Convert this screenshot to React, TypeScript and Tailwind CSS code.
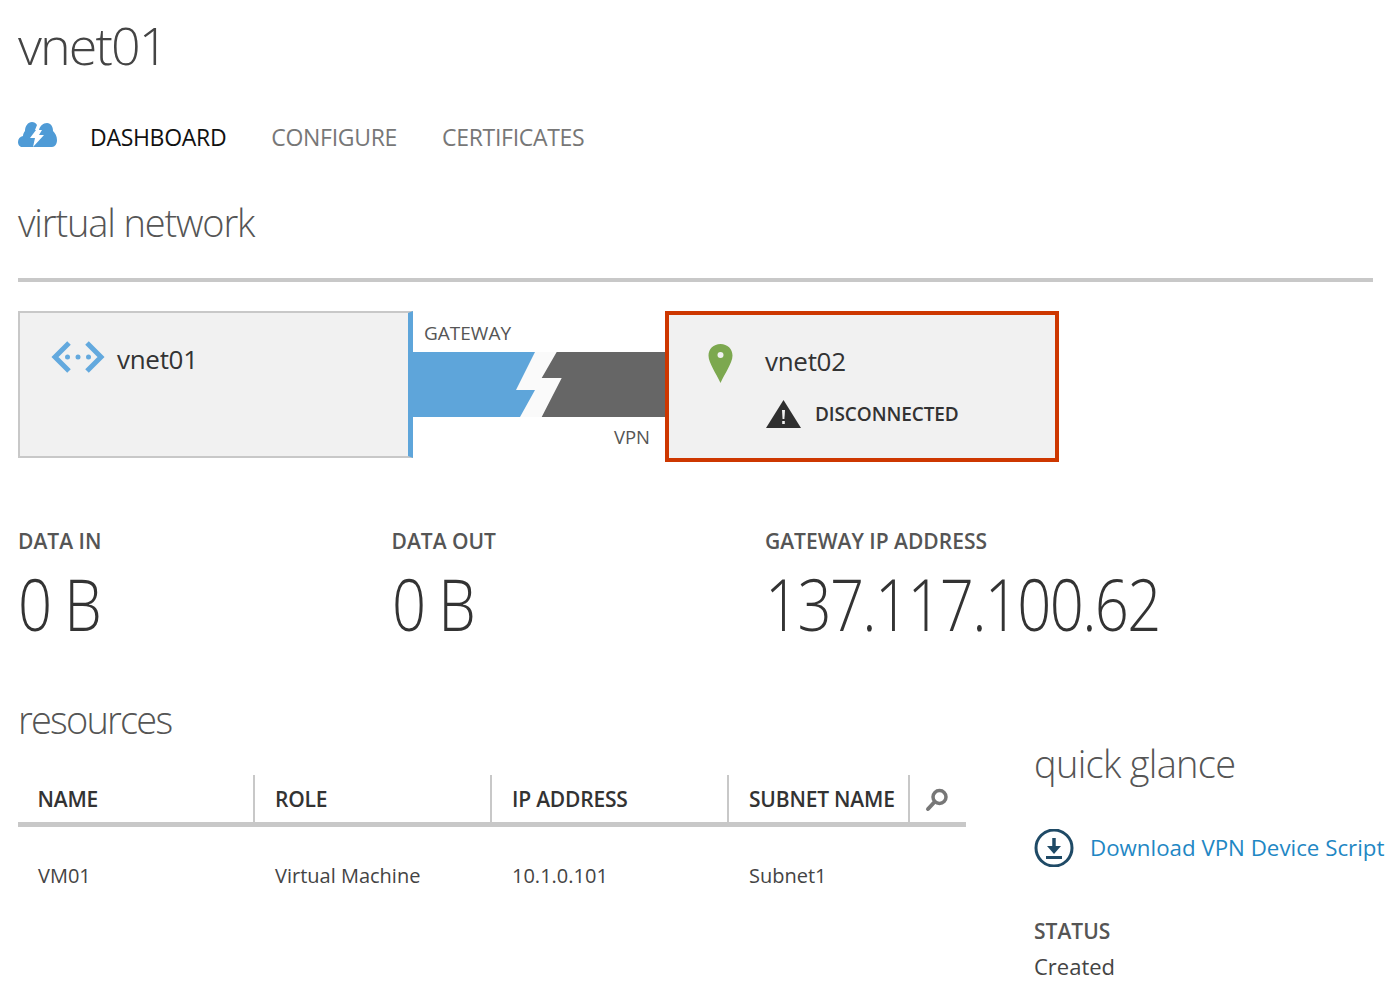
const sans = { fontFamily: '"Open Sans", "Noto Sans", sans-serif' };

const CloudIcon = () => (
  <svg width="39" height="25" viewBox="0 0 39 25" className="mb-[5px] shrink-0">
    <path
      d="M4 25C1.500 25 0 22.500 0 20c0-3 2-5.500 5-6 0-2 1-4 2-5C7 4 10 0 14 0c2 0 4 1 5 3l-2 5h4c1-4 4-7 8-7 4 0 6 4 6 8 2 2 4 5 4 9 0 4-2 7-5 7z"
      fill="#4f9bd6"
    />
    <path d="M18 8h6l-3 5h5L15 25l2-9h-5z" fill="#fff" />
  </svg>
);

const VnetIcon = () => (
  <svg width="54" height="34" viewBox="0 0 54 34" className="mt-[1px] shrink-0" fill="none" stroke="#63a9de" strokeWidth="5">
    <path d="M18 3 4 17l14 14" />
    <path d="M36 3l14 14-14 14" />
    <g fill="#63a9de" stroke="none">
      <circle cx="16.500" cy="17" r="2.500" />
      <circle cx="27" cy="17" r="2.500" />
      <circle cx="37.500" cy="17" r="2.500" />
    </g>
  </svg>
);

const PinIcon = () => (
  <svg width="25" height="40" viewBox="0 0 25 40" className="shrink-0">
    <path
      d="M12.500 1C5.500 1 .5 6 .5 12.500 .5 20 8 30 12.500 40 17 30 24.500 20 24.500 12.500 24.500 6 19.500 1 12.500 1z"
      fill="#7ca84f"
    />
    <circle cx="12.500" cy="12" r="3" fill="#f1f1f1" />
  </svg>
);

const WarnIcon = () => (
  <svg width="35" height="28" viewBox="0 0 35 28" className="shrink-0">
    <path d="M17.500 0 35 28H0z" fill="#2f2f2f" />
    <path d="M16 10h3l-.6 9h-1.800z" fill="#f1f1f1" />
    <rect x="16.200" y="21" width="2.600" height="3" fill="#f1f1f1" />
  </svg>
);

const SearchIcon = () => (
  <svg width="24" height="24" viewBox="0 0 24 24" fill="none">
    <circle cx="14.500" cy="9" r="6.500" stroke="#777" strokeWidth="3.500" />
    <path d="M9.500 14 3 21" stroke="#777" strokeWidth="4" strokeLinecap="round" />
  </svg>
);

const DownloadIcon = () => (
  <svg width="40" height="38" viewBox="0 0 40 38" fill="none" className="shrink-0">
    <circle cx="20" cy="19" r="18" stroke="#1f4a66" strokeWidth="3" />
    <path d="M20 9v13" stroke="#1f4a66" strokeWidth="3.500" />
    <path d="M13 17l7 8 7-8z" fill="#1f4a66" />
    <rect x="12" y="27" width="16" height="3" fill="#1f4a66" />
  </svg>
);

const Link = () => (
  <svg width="252" height="65" viewBox="0 0 252 65" className="block">
    <rect width="252" height="65" fill="#666666" />
    <rect width="122" height="65" fill="#5ea5da" />
    <path d="M122 0h21.700l-15 26h20l-20 39H107l15-27H103z" fill="#fafafa" />
  </svg>
);

const Stat = ({ label, value, wide }: { label: string; value: string; wide?: boolean }) => (
  <div className={wide ? 'flex-1' : 'w-[373.500px]'}>
    <div className="text-[21px] leading-[26px] font-semibold text-[#555]">{label}</div>
    <div className="mt-[1px] origin-left scale-x-[0.83] whitespace-nowrap text-[72px] leading-[96px] font-light text-[#333] tracking-[-2px]">
      {value}
    </div>
  </div>
);

const columns = [
  { name: 'NAME', value: 'VM01', width: 'w-[235px]' },
  { name: 'ROLE', value: 'Virtual Machine', width: 'w-[237px]' },
  { name: 'IP ADDRESS', value: '10.1.0.101', width: 'w-[237px]' },
  { name: 'SUBNET NAME', value: 'Subnet1', width: 'w-[181px]' },
];

export default function App() {
  return (
    <div className="h-[984px] w-[1399px] overflow-hidden bg-white pl-[18px]" style={sans}>
      <h1 className="pt-[9px] text-[52px] leading-[72px] font-light text-[#444] tracking-[-1.900px]">vnet01</h1>

      {/* Tabs */}
      <nav className="mt-[42px] flex h-[28px] items-center text-[23px] tracking-[-0.300px]">
        <CloudIcon />
        <span className="ml-[33px] text-[#111]">DASHBOARD</span>
        <span className="ml-[45px] text-[#777]">CONFIGURE</span>
        <span className="ml-[45px] text-[#777]">CERTIFICATES</span>
      </nav>

      <h2 className="mt-[45px] text-[38px] leading-[52px] font-light text-[#555] tracking-[-1.150px]">virtual network</h2>
      <div className="mt-[30px] mr-[26px] h-[4px] bg-[#c8c8c8]" />

      {/* Connection diagram */}
      <div className="mt-[29px] flex h-[151px] items-start">
        <div className="flex h-[147px] w-[395px] items-start border-2 border-r-[5px] border-[#c8c8c8] border-r-[#5ea5da] bg-[#f1f1f1] pt-[26px] pl-[31px]">
          <VnetIcon />
          <span className="mt-[4px] ml-[12px] text-[26px] leading-[32px] text-[#333] tracking-[-0.300px]">vnet01</span>
        </div>
        <div className="w-[252px]">
          <div className="h-[41px] pt-[9px] pl-[11px] text-[19px] leading-[26px] text-[#555]">GATEWAY</div>
          <Link />
          <div className="pt-[7px] pr-[15px] text-right text-[18.500px] leading-[26px] text-[#555]">VPN</div>
        </div>
        <div className="h-[151px] w-[394px] border-4 border-[#cd3700] bg-[#f1f1f1] pt-[28px] pl-[39px]">
          <div className="flex items-start">
            <PinIcon />
            <span className="ml-[32px] text-[26px] leading-[36px] text-[#333] tracking-[-0.300px]">vnet02</span>
          </div>
          <div className="mt-[17px] ml-[58px] flex items-center">
            <WarnIcon />
            <span className="ml-[14px] text-[19px] font-semibold text-[#333] tracking-[-0.100px]">DISCONNECTED</span>
          </div>
        </div>
      </div>

      {/* Stats */}
      <div className="mt-[66px] flex">
        <Stat label="DATA IN" value="0 B" />
        <Stat label="DATA OUT" value="0 B" />
        <Stat label="GATEWAY IP ADDRESS" value="137.117.100.62" wide />
      </div>

      <div className="flex">
        <div className="w-[948px]">
          <h2 className="mt-[42px] text-[38px] leading-[52px] font-light text-[#555] tracking-[-1.800px]">resources</h2>
          <div className="mt-[30px] flex h-[52px] border-b-[5px] border-[#c8c8c8]">
            {columns.map((c, i) => (
              <div
                key={c.name}
                className={`${c.width} ${i > 0 ? 'border-l-2 border-[#c8c8c8] pl-[20px]' : 'pl-[19.500px]'} flex items-end pb-[9px] text-[21px] leading-[28px] font-semibold text-[#333] tracking-[-0.200px]`}
              >
                {c.name}
              </div>
            ))}
            <div className="flex flex-1 items-end border-l-2 border-[#c8c8c8] pb-[10px] pl-[15px]">
              <SearchIcon />
            </div>
          </div>
          <div className="flex pt-[35px] text-[20px] leading-[28px] text-[#444]">
            {columns.map((c, i) => (
              <div key={c.name} className={`${c.width} ${i > 0 ? 'pl-[22px]' : 'pl-[20px]'}`}>
                {c.value}
              </div>
            ))}
          </div>
        </div>

        {/* Quick glance */}
        <aside className="ml-[68px] flex-1 pt-[86px]">
          <h2 className="text-[38px] leading-[52px] font-light text-[#555] tracking-[-0.700px]">quick glance</h2>
          <div className="mt-[40px] flex items-center whitespace-nowrap">
            <DownloadIcon />
            <span className="ml-[16px] text-[22.300px] text-[#1f87c4]">Download VPN Device Script</span>
          </div>
          <div className="mt-[50px] text-[21px] leading-[28px] font-semibold text-[#555]">STATUS</div>
          <div className="mt-[7px] text-[22px] leading-[28px] text-[#444]">Created</div>
        </aside>
      </div>
    </div>
  );
}
